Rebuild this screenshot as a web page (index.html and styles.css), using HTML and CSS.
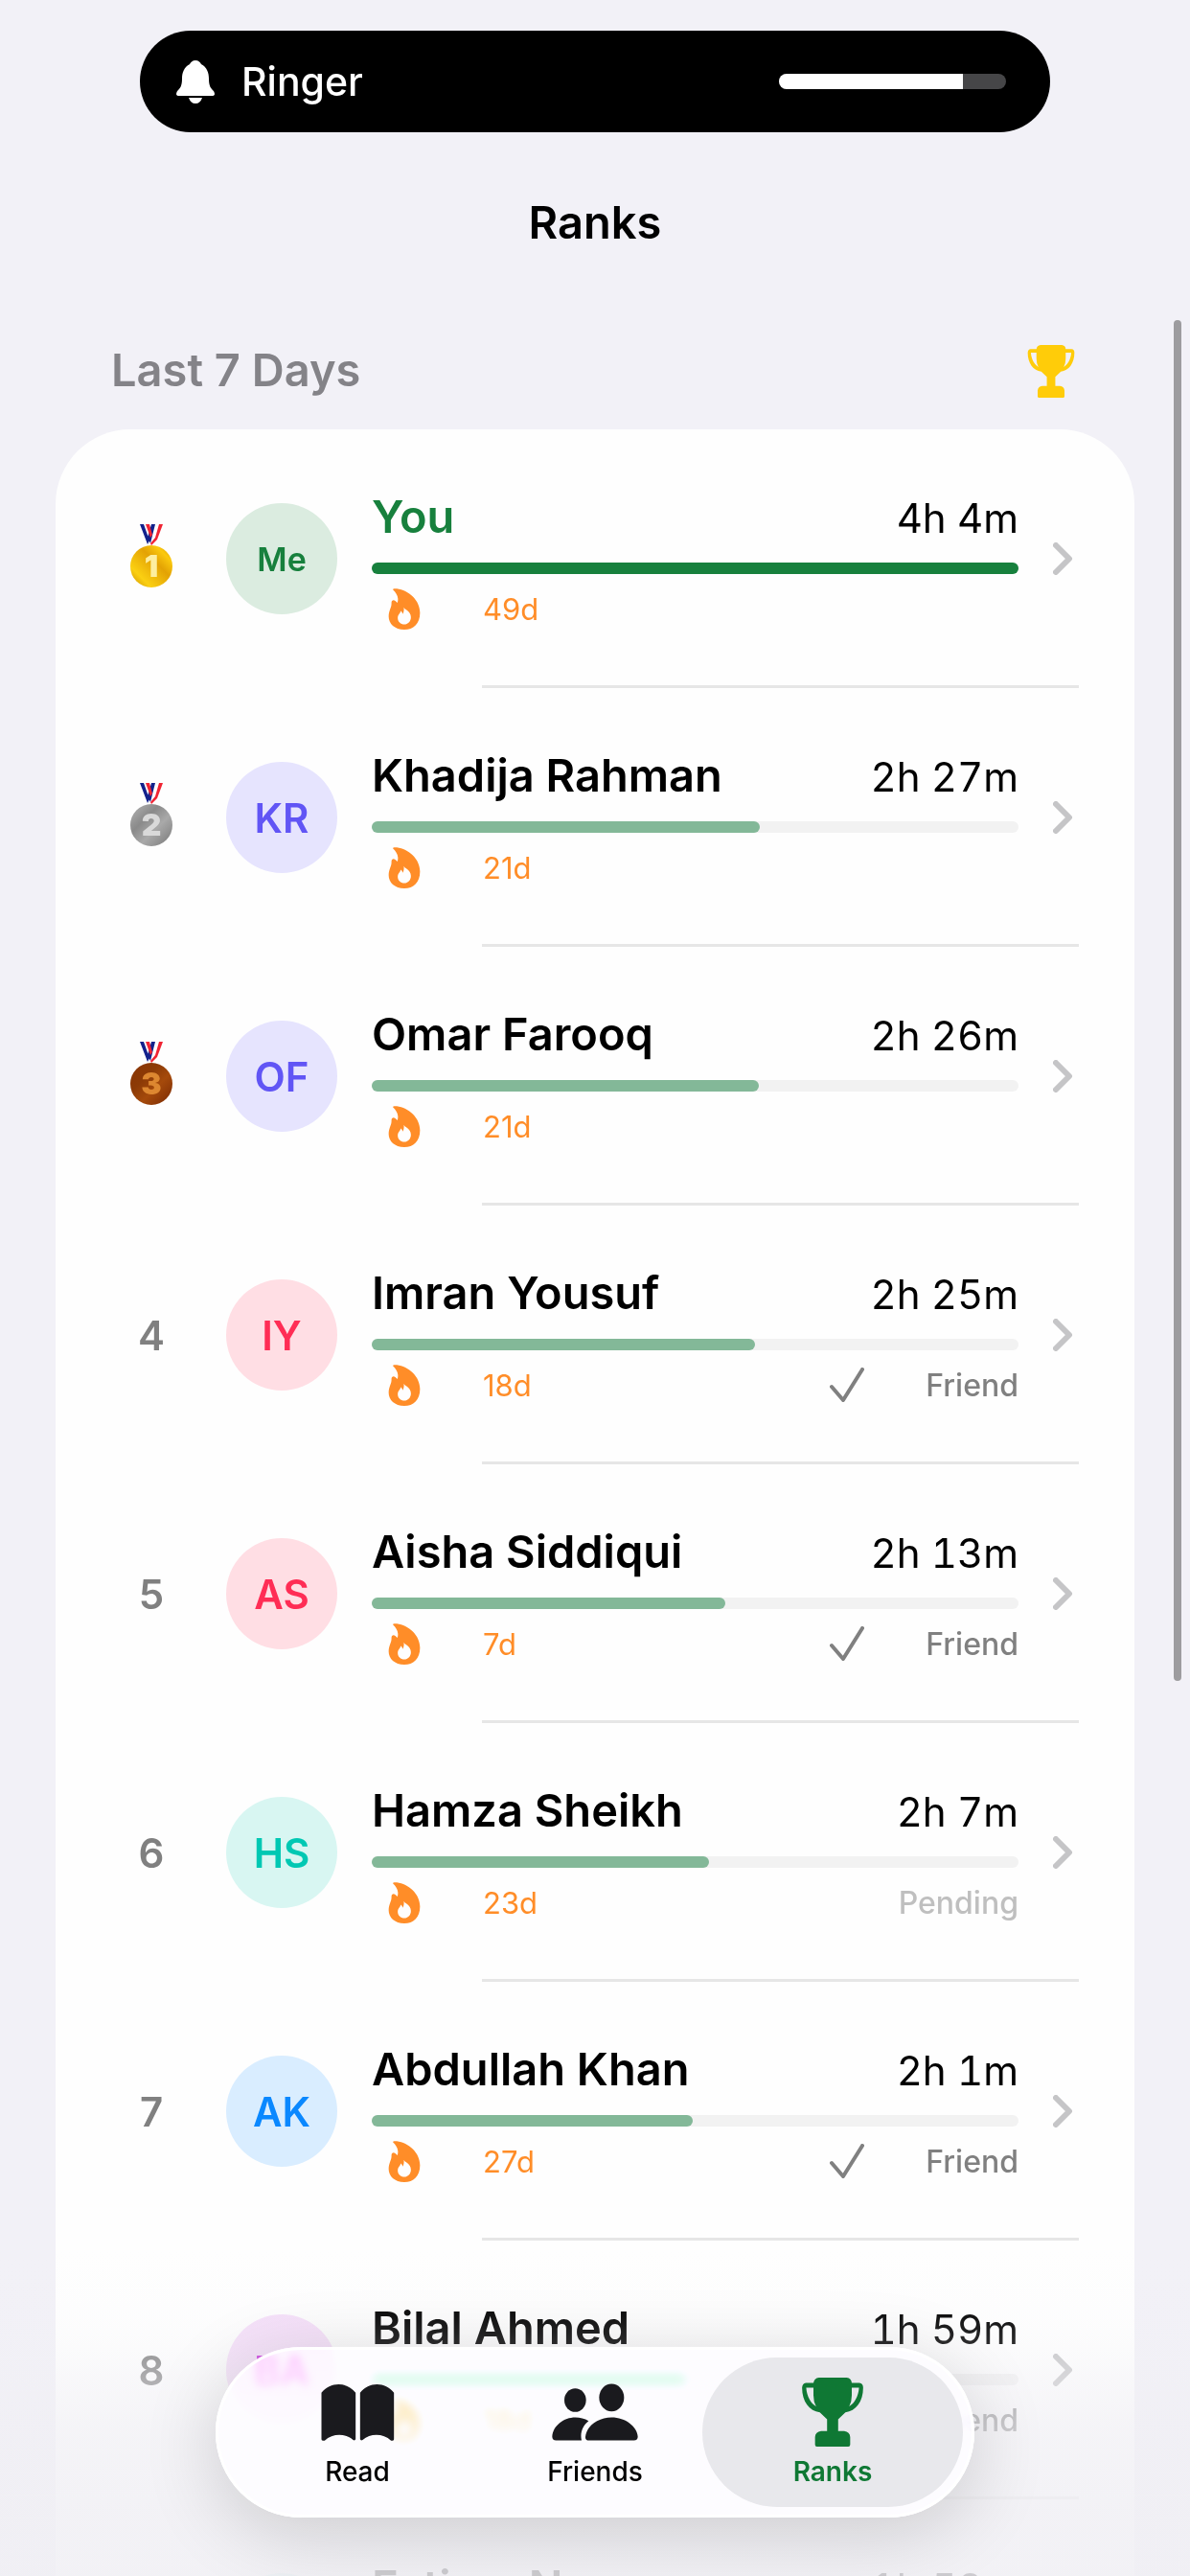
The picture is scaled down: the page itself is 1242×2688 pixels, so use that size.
FILE: index.html
```html
<!DOCTYPE html>
<html lang="en">
<head>
<meta charset="utf-8">
<meta name="viewport" content="width=device-width, initial-scale=1">
<title>Ranks</title>
<link rel="stylesheet" href="styles.css">
</head>
<body>
<svg class="sprite" aria-hidden="true">
  <symbol id="trophy" viewBox="652 244 193 218"><path fill-rule="evenodd" d="M705 244H793Q808 246 809 261H833Q845 262 845 276C845 320 822 350 789 354L766 376V413H785Q803 415 804 432V456Q804 462 798 462H699Q693 462 693 456V432Q694 415 712 413H731V376L708 354C675 350 652 320 652 276Q653 262 664 261H688Q690 246 705 244ZM688 276H665C667 305 680 325 696 335Q688 320 688 300ZM809 276H832C830 305 817 325 801 335Q809 320 809 300Z"/></symbol>
  <symbol id="flame" viewBox="74 40 104 136"><path fill-rule="evenodd" d="M90 47C88 43 95 42 102 43C140 48 176 80 176 120C176 155 155 174 126 174C95 174 76 155 76 132C76 110 86 105 85 87C85 80 92 77 97 82L104 88C108 78 106 62 90 47ZM124 103C126 110 147 115 147 134C147 148 137 157 126 157C114 157 105 148 105 137C105 125 114 122 114 114C117 116 120 119 121 124C124 119 126 110 124 103Z"/></symbol>
  <symbol id="check" viewBox="0 0 36 36"><path fill="none" stroke="currentColor" stroke-width="4" stroke-linecap="round" stroke-linejoin="round" d="M2 20L14 34L34 2"/></symbol>
  <symbol id="chevron" viewBox="0 0 21 34"><path fill="none" stroke="currentColor" stroke-width="6" stroke-linecap="round" stroke-linejoin="round" d="M3 3L17 17L3 31"/></symbol>
  <symbol id="book" viewBox="404 262 230 180"><path d="M405 291C432 256 485 256 512 291V437Q510 442 504 439C480 418 440 418 415 441H409Q405 441 405 437ZM632 291C605 256 553 256 526 291V437Q528 442 534 439C558 418 598 418 623 441H628Q632 441 632 437Z"/></symbol>
  <symbol id="people" viewBox="1132 263 270 179"><ellipse cx="1205" cy="315" rx="34" ry="37"/><ellipse cx="1319" cy="307" rx="39" ry="43"/><path d="M1145 441Q1133 441 1133 429C1135 395 1170 369 1205 369Q1228 369 1247 380C1230 393 1219 415 1225 441ZM1248 441Q1236 441 1237 430C1240 395 1278 369 1319 369C1362 369 1400 398 1401 430Q1401 441 1389 441Z"/></symbol>
  <symbol id="bell" viewBox="0 0 40 45"><path d="M20 0C23 0 25 2 26 4C32 7 34 13 34 19C34 27 36 29 39 32Q40 34 40 35Q40 37 37 37H3Q0 37 0 35Q0 34 1 32C4 29 6 27 6 19C6 13 8 7 14 4C15 2 17 0 20 0ZM13 39H27Q25 45 20 45Q15 45 13 39Z"/></symbol>
  <symbol id="ribbon" viewBox="0 0 44 66"><path fill="#fff" d="M11 0H34L24 22H18Z"/><path fill="#12218c" d="M10 0H14L20 17L18 21ZM22 0H26L21 20L18 14Z"/><path fill="#f02433" d="M16 0H20L23 11L21 14ZM30 0H34L28 16L22 22L21 20L26 14Z"/></symbol>
  <linearGradient id="gold" x1="0" y1="1" x2="1" y2="0"><stop offset="0" stop-color="#c98a00"/><stop offset=".25" stop-color="#fbd012"/><stop offset=".6" stop-color="#e3a204"/><stop offset=".8" stop-color="#fbc90e"/><stop offset="1" stop-color="#d79200"/></linearGradient>
  <linearGradient id="silver" x1="0" y1="0" x2="1" y2="1"><stop offset="0" stop-color="#b5b5b5"/><stop offset=".35" stop-color="#8a8a8a"/><stop offset=".6" stop-color="#a9a9a9"/><stop offset="1" stop-color="#777"/></linearGradient>
  <linearGradient id="bronze" x1="0" y1="0" x2="1" y2="1"><stop offset="0" stop-color="#8a3504"/><stop offset=".35" stop-color="#8c3a06"/><stop offset=".6" stop-color="#a54a0b"/><stop offset="1" stop-color="#782802"/></linearGradient>
</svg>

<div class="screen">
  <div class="ringer">
    <svg class="ringer-icon"><use href="#bell"/></svg>
    <span class="ringer-label" id="ringer-label">Ringer</span>
    <div class="ringer-track" role="meter" aria-labelledby="ringer-label" aria-valuemin="0" aria-valuemax="100" aria-valuenow="81"><div class="ringer-level" style="width:81%"></div></div>
  </div>

  <h1 class="title">Ranks</h1>

  <main class="content">
    <header class="section-head">
      <h2 class="section-title">Last 7 Days</h2>
      <button class="trophy-button" type="button" aria-label="Awards"><svg class="trophy-icon"><use href="#trophy"/></svg></button>
    </header>

    <ol class="card">
      <li class="entry"><a class="row" href="#you">
        <span class="rank"><svg class="medal" viewBox="0 0 44 66"><use href="#ribbon"/><circle cx="22" cy="44" r="22" fill="url(#gold)"/><text class="medal-number gold-number" x="22" y="55">1</text></svg></span>
        <span class="avatar green small">Me</span>
        <span class="details">
          <span class="line"><span class="name me">You</span><span class="time">4h 4m</span></span>
          <span class="track"><span class="fill full" style="width:100%"></span></span>
          <span class="meta"><span class="tag streak"><svg class="flame"><use href="#flame"/></svg>49d</span></span>
        </span>
        <svg class="chevron"><use href="#chevron"/></svg>
      </a></li>
      <li class="entry"><a class="row" href="#khadija">
        <span class="rank"><svg class="medal" viewBox="0 0 44 66"><use href="#ribbon"/><circle cx="22" cy="44" r="22" fill="url(#silver)"/><text class="medal-number silver-number" x="22" y="55">2</text></svg></span>
        <span class="avatar indigo">KR</span>
        <span class="details">
          <span class="line"><span class="name">Khadija Rahman</span><span class="time">2h 27m</span></span>
          <span class="track"><span class="fill" style="width:60%"></span></span>
          <span class="meta"><span class="tag streak"><svg class="flame"><use href="#flame"/></svg>21d</span></span>
        </span>
        <svg class="chevron"><use href="#chevron"/></svg>
      </a></li>
      <li class="entry"><a class="row" href="#omar">
        <span class="rank"><svg class="medal" viewBox="0 0 44 66"><use href="#ribbon"/><circle cx="22" cy="44" r="22" fill="url(#bronze)"/><text class="medal-number bronze-number" x="22" y="55">3</text></svg></span>
        <span class="avatar indigo">OF</span>
        <span class="details">
          <span class="line"><span class="name">Omar Farooq</span><span class="time">2h 26m</span></span>
          <span class="track"><span class="fill" style="width:59.8%"></span></span>
          <span class="meta"><span class="tag streak"><svg class="flame"><use href="#flame"/></svg>21d</span></span>
        </span>
        <svg class="chevron"><use href="#chevron"/></svg>
      </a></li>
      <li class="entry"><a class="row" href="#imran">
        <span class="rank">4</span>
        <span class="avatar pink">IY</span>
        <span class="details">
          <span class="line"><span class="name">Imran Yousuf</span><span class="time">2h 25m</span></span>
          <span class="track"><span class="fill" style="width:59.3%"></span></span>
          <span class="meta"><span class="tag streak"><svg class="flame"><use href="#flame"/></svg>18d</span><span class="tag friend"><svg class="check"><use href="#check"/></svg>Friend</span></span>
        </span>
        <svg class="chevron"><use href="#chevron"/></svg>
      </a></li>
      <li class="entry"><a class="row" href="#aisha">
        <span class="rank">5</span>
        <span class="avatar pink">AS</span>
        <span class="details">
          <span class="line"><span class="name">Aisha Siddiqui</span><span class="time">2h 13m</span></span>
          <span class="track"><span class="fill" style="width:54.7%"></span></span>
          <span class="meta"><span class="tag streak"><svg class="flame"><use href="#flame"/></svg>7d</span><span class="tag friend"><svg class="check"><use href="#check"/></svg>Friend</span></span>
        </span>
        <svg class="chevron"><use href="#chevron"/></svg>
      </a></li>
      <li class="entry"><a class="row" href="#hamza">
        <span class="rank">6</span>
        <span class="avatar teal">HS</span>
        <span class="details">
          <span class="line"><span class="name">Hamza Sheikh</span><span class="time">2h 7m</span></span>
          <span class="track"><span class="fill" style="width:52.2%"></span></span>
          <span class="meta"><span class="tag streak"><svg class="flame"><use href="#flame"/></svg>23d</span><span class="tag pending">Pending</span></span>
        </span>
        <svg class="chevron"><use href="#chevron"/></svg>
      </a></li>
      <li class="entry"><a class="row" href="#abdullah">
        <span class="rank">7</span>
        <span class="avatar blue">AK</span>
        <span class="details">
          <span class="line"><span class="name">Abdullah Khan</span><span class="time">2h 1m</span></span>
          <span class="track"><span class="fill" style="width:49.6%"></span></span>
          <span class="meta"><span class="tag streak"><svg class="flame"><use href="#flame"/></svg>27d</span><span class="tag friend"><svg class="check"><use href="#check"/></svg>Friend</span></span>
        </span>
        <svg class="chevron"><use href="#chevron"/></svg>
      </a></li>
      <li class="entry"><a class="row" href="#bilal">
        <span class="rank">8</span>
        <span class="avatar purple">BA</span>
        <span class="details">
          <span class="line"><span class="name">Bilal Ahmed</span><span class="time">1h 59m</span></span>
          <span class="track"><span class="fill" style="width:48.6%"></span></span>
          <span class="meta"><span class="tag streak"><svg class="flame"><use href="#flame"/></svg>18d</span><span class="tag friend"><svg class="check"><use href="#check"/></svg>Friend</span></span>
        </span>
        <svg class="chevron"><use href="#chevron"/></svg>
      </a></li>
      <li class="entry"><a class="row" href="#fatima">
        <span class="rank">9</span>
        <span class="avatar teal">FN</span>
        <span class="details">
          <span class="line"><span class="name">Fatima Noor</span><span class="time">1h 58m</span></span>
          <span class="track"><span class="fill" style="width:48.4%"></span></span>
          <span class="meta"><span class="tag streak"><svg class="flame"><use href="#flame"/></svg>12d</span></span>
        </span>
        <svg class="chevron"><use href="#chevron"/></svg>
      </a></li>
    </ol>
  </main>

  <div class="scroll-thumb"></div>
  <div class="fade"></div>

  <nav class="tabs" aria-label="Main">
    <a class="tab" href="#read"><svg class="tab-icon book"><use href="#book"/></svg><span>Read</span></a>
    <a class="tab" href="#friends"><svg class="tab-icon people"><use href="#people"/></svg><span>Friends</span></a>
    <a class="tab selected" href="#ranks" aria-current="page"><svg class="tab-icon cup"><use href="#trophy"/></svg><span>Ranks</span></a>
  </nav>
</div>
</body>
</html>
```
FILE: styles.css
```css
* { box-sizing: border-box; }

body {
  margin: 0;
  background: #f2f1f7;
  color: #000;
  font-family: Inter, "Liberation Sans", sans-serif;
}

a { color: inherit; text-decoration: none; }
svg { display: block; fill: currentColor; }
.sprite { position: absolute; width: 0; height: 0; }

.screen {
  position: relative;
  display: flex;
  flex-direction: column;
  height: 100vh;
  padding-top: 32px;
  overflow: hidden;
}

/* Volume indicator */
.ringer {
  display: flex;
  align-items: center;
  gap: 28px;
  flex: none;
  height: 106px;
  margin: 0 146px;
  padding: 0 46px 0 38px;
  border-radius: 53px;
  background: #000;
  color: #fff;
}
.ringer-icon { width: 40px; height: 45px; }
.ringer-label { flex: 1; font-size: 41px; font-weight: 500; }
.ringer-track {
  width: 237px;
  height: 16px;
  border-radius: 8px;
  background: #464648;
  overflow: hidden;
}
.ringer-level { height: 100%; background: #fff; }

.title {
  flex: none;
  margin: 64px 0 0;
  font-size: 47px;
  font-weight: 600;
  line-height: 60px;
  text-align: center;
}

/* Leaderboard */
.content {
  flex: 1;
  min-height: 0;
  padding: 94px 58px 0;
  overflow-y: auto;
  scrollbar-width: none;
}
.section-head {
  display: flex;
  align-items: center;
  justify-content: space-between;
  height: 60px;
  margin-bottom: 32px;
  padding: 0 62px 0 58px;
}
.section-title {
  margin: 0;
  color: #848388;
  font-size: 47px;
  font-weight: 600;
  line-height: 60px;
}
.trophy-button {
  padding: 2px 0 0;
  border: 0;
  background: none;
  color: #ffcc09;
}
.trophy-icon { width: 50px; height: 55px; }

.card {
  margin: 0;
  padding: 0;
  border-radius: 78px;
  background: #fefefe;
  list-style: none;
}
.entry::after {
  content: "";
  display: block;
  height: 3px;
  margin: 0 58px 0 445px;
  background: #e6e6e6;
}
.row {
  display: grid;
  grid-template-columns: 84px 116px 1fr 27px;
  align-items: center;
  column-gap: 36px;
  min-height: 267px;
  padding: 3px 58px 0;
}
.rank {
  display: flex;
  justify-content: center;
  color: #808080;
  font-size: 42px;
  font-weight: 600;
}
.medal { width: 44px; height: 66px; margin-bottom: 6px; }
.medal-number { font-size: 32px; font-weight: 900; text-anchor: middle; }
.gold-number { fill: #fdeea0; }
.silver-number { fill: #d9d9d9; }
.bronze-number { fill: #dd8730; }

.avatar {
  display: grid;
  place-items: center;
  height: 116px;
  border-radius: 50%;
  font-size: 42px;
  font-weight: 600;
}
.avatar.small { font-size: 34px; }
.green { background: #dbece0; color: #17803d; }
.indigo { background: #e6e4fe; color: #6155f5; }
.pink { background: #ffdee4; color: #ff2d55; }
.teal { background: #d8f6f2; color: #00c8b3; }
.blue { background: #d9edff; color: #0a88ff; }
.purple { background: #f6e0fa; color: #cb30e0; }

.details { display: grid; padding-top: 2px; }
.line {
  display: flex;
  align-items: baseline;
  justify-content: space-between;
  line-height: 60px;
}
.name { font-size: 47px; font-weight: 600; }
.me { color: #17803d; }
.time { font-size: 42px; font-variant-numeric: tabular-nums; }
.track {
  height: 12px;
  margin: 16px 0 12px;
  border-radius: 6px;
  background: #f2f2f2;
}
.fill {
  display: block;
  height: 100%;
  border-radius: 6px;
  background: #83b898;
}
.full { background: #17803d; }
.meta {
  display: flex;
  justify-content: space-between;
  height: 48px;
  font-size: 32px;
}
.tag { display: flex; align-items: center; }
.streak { color: #ff8d28; font-size: 31px; }
.flame { width: 34px; height: 45px; margin: 0 65px 0 17px; }
.friend { color: #808080; font-weight: 500; }
.check { width: 36px; height: 36px; margin-right: 64px; }
.pending { color: #bfbfbf; font-weight: 500; }
.chevron { width: 21px; height: 34px; color: #c5c5c7; }

/* Layers over the list */
.scroll-thumb {
  position: absolute;
  top: 334px;
  right: 9px;
  width: 8px;
  height: 1420px;
  border-radius: 4px;
  background: #9d9c9f;
}
.fade {
  position: absolute;
  inset: auto 0 0;
  height: 340px;
  background: linear-gradient(
    rgb(240 239 244 / 0),
    rgb(240 239 244 / .08) 20%,
    rgb(240 239 244 / .2) 30%,
    rgb(240 239 244 / .42) 40%,
    rgb(240 239 244 / .65) 54%,
    rgb(240 239 244 / .82) 80%,
    rgb(240 239 244 / .85));
  pointer-events: none;
}
.tabs {
  position: absolute;
  right: 225px;
  bottom: 61px;
  left: 225px;
  display: grid;
  grid-template-columns: repeat(3, 1fr);
  padding: 11px 24px;
  border-radius: 89px;
  background: rgb(252 251 255 / .78);
  box-shadow: inset 0 0 0 3px #fff, 0 16px 80px rgb(0 0 0 / .16);
  backdrop-filter: blur(5px) saturate(4) brightness(1.08);
}
.tab {
  display: grid;
  grid-template-rows: 72px 34px;
  row-gap: 9px;
  justify-items: center;
  align-items: center;
  align-content: start;
  height: 156px;
  padding-top: 21px;
  border-radius: 78px;
  font-size: 28px;
  font-weight: 500;
  line-height: 34px;
}
.tab-icon { color: #1a1a1e; }
.book { width: 77px; height: 60px; }
.people { width: 90px; height: 60px; }
.cup { width: 64px; height: 72px; color: #0f7834; }
.selected {
  margin: 0 -12px;
  background: #e8e8ec;
  color: #0f7834;
  font-weight: 600;
}
```
